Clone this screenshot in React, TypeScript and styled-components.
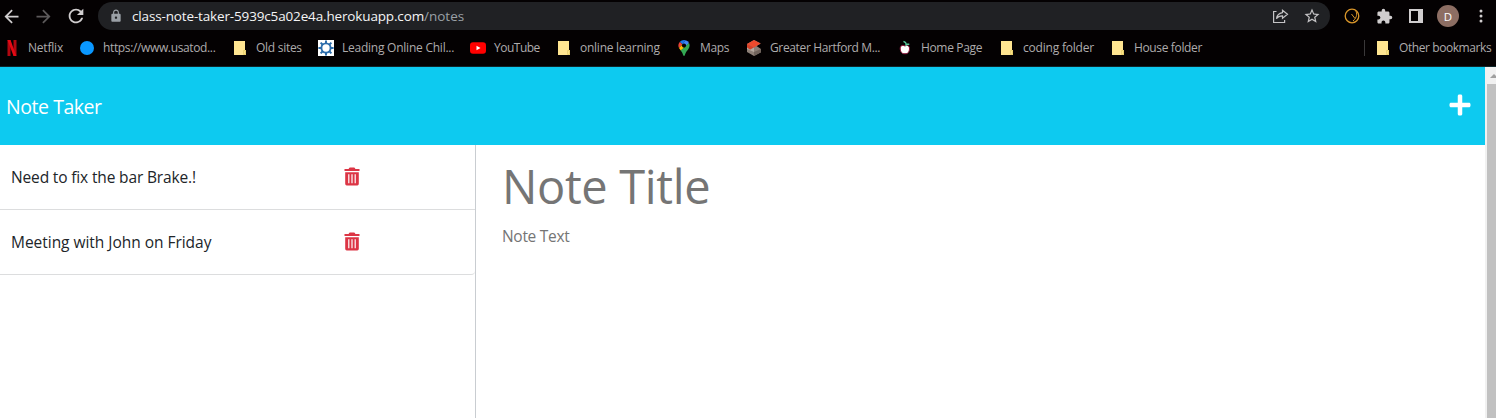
import React from "react";
import styled, { createGlobalStyle } from "styled-components";
import { FaPlus } from "react-icons/fa";
import { MdArrowBack, MdArrowForward, MdRefresh, MdLock, MdStarOutline, MdExtension } from "react-icons/md";

const Global = createGlobalStyle`
  * { box-sizing: border-box; }
  body { margin: 0; background: #fff; font-family: "Open Sans", "Noto Sans", sans-serif; overflow: hidden; }
`;

const Page = styled.div`
  display: flex;
  flex-direction: column;
  height: 418px;
  overflow: hidden;
`;

const Browser = styled.div`
  flex: none;
  height: 67px;
  background: #040102;
  border-bottom: 1px solid #10262b;
`;

const Toolbar = styled.div`
  display: flex;
  align-items: center;
  height: 32px;
  color: #d0cdce;
`;

const NavButtons = styled.div`
  display: flex;
  align-items: center;
  gap: 11px;
  width: 98px;
  padding-left: 1px;
  svg { display: block; }
`;

const Dim = styled.span`
  color: #5c595a;
`;

const AddressBar = styled.div`
  display: flex;
  align-items: center;
  width: 1232px;
  height: 28px;
  padding: 0 9px 0 11px;
  border-radius: 14px;
  background: #202124;
  color: #9aa0a6;
`;

const Spaced = styled.span<{ $ls?: number }>`
  letter-spacing: ${(p) => p.$ls ?? 0}px;
  white-space: nowrap;
`;

const Url = styled.div`
  flex: 1;
  margin-left: 9px;
  font-size: 13.5px;
  line-height: 18px;
  color: #9aa0a6;
`;

const Host = styled(Spaced)`
  color: #f4f4f5;
`;

const BarActions = styled.div`
  display: flex;
  align-items: center;
  gap: 14px;
  color: #c4c3c5;
`;

const Extensions = styled.div`
  display: flex;
  flex: 1;
  align-items: center;
  padding-left: 13px;
`;

const Slot = styled.div<{ $w: number }>`
  display: flex;
  align-items: center;
  width: ${(p) => p.$w}px;
`;

const Avatar = styled.div`
  display: grid;
  place-items: center;
  width: 22px;
  height: 22px;
  border-radius: 50%;
  background: #8d6e63;
  color: #fff;
  font-size: 11.5px;
`;

const Bookmarks = styled.div`
  display: flex;
  align-items: center;
  gap: 16px;
  height: 32px;
  padding-left: 4px;
`;

const Bookmark = styled.div`
  display: flex;
  align-items: center;
  gap: 8px;
  svg { flex: none; display: block; }
`;

const Label = styled.span<{ $w: number; $ls: number }>`
  width: ${(p) => p.$w}px;
  letter-spacing: ${(p) => p.$ls}px;
  font-size: 12px;
  line-height: 16px;
  color: #aeabac;
  white-space: nowrap;
`;

const OtherBookmarks = styled(Bookmark)`
  margin-left: auto;
  height: 16px;
  padding-left: 10px;
  border-left: 1px solid #3a3839;
  margin-right: 5px;
`;

const Viewport = styled.div`
  display: flex;
  flex: 1;
  min-height: 0;
`;

const Content = styled.div`
  display: flex;
  flex: 1;
  flex-direction: column;
`;

const Header = styled.header`
  display: flex;
  flex: none;
  align-items: center;
  justify-content: space-between;
  height: 78px;
  padding: 0 13px 0 6px;
  background: #0dcaf0;
  color: #fff;
  svg { margin-bottom: 2px; }
`;

const Brand = styled.div`
  font-size: 19.5px;
  line-height: 30px;
  padding-top: 1px;
`;

const Main = styled.main`
  display: flex;
  flex: 1;
  min-height: 0;
`;

const Sidebar = styled.aside`
  width: 476px;
  border-right: 1px solid #c9cdd1;
`;

const Note = styled.div<{ $last?: boolean }>`
  display: flex;
  align-items: center;
  height: 65px;
  padding-left: 11px;
  border-bottom: 1px solid #dcddde;
  border-bottom-right-radius: ${(p) => (p.$last ? 4 : 0)}px;
  color: #212529;
  font-size: 15.5px;
  svg { color: #dc3545; margin-bottom: 2px; }
`;

const NoteName = styled.div`
  width: 333px;
`;

const Editor = styled.section`
  flex: 1;
  padding: 11px 0 0 26px;
  color: #757575;
`;

const Title = styled.div`
  font-size: 47px;
  line-height: 60px;
`;

const Body = styled.div`
  margin-top: 8px;
  font-size: 15.5px;
  line-height: 24px;
`;

const Scrollbar = styled.div`
  display: flex;
  flex-direction: column;
  width: 11px;
  padding-left: 2px;
  background: #f1f1f1;
  overflow: hidden;
`;

const ScrollUp = styled.div`
  flex: none;
  height: 17px;
  padding: 7px 0 0 3px;
  svg { display: block; }
`;

const Thumb = styled.div`
  flex: 1;
  background: #c1c1c1;
`;

const Icon = ({ children }: { children: React.ReactNode }) => (
  <svg width="16" height="16" viewBox="0 0 16 16">{children}</svg>
);

const Folder = () => (
  <Icon>
    <path d="M2 1h11v9h1v5H2z" fill="#ffe591" />
    <path d="M11.7 14.5v-4h1.8v4z" fill="#ffe88f" stroke="#d9bd55" strokeWidth=".6" />
  </Icon>
);

const Netflix = () => (
  <Icon>
    <path d="M3.5 0h3v16l-3 .3zM9.500 0h3v16.300l-3-.3z" fill="#b20710" />
    <path d="M3.500 0h3l6 16.300-3-.3z" fill="#e50914" />
  </Icon>
);

const Dot = () => (
  <Icon><circle cx="8" cy="8" r="7" fill="#0a97ff" /></Icon>
);

const Gear = () => (
  <Icon>
    <rect width="16" height="16" fill="#fff" />
    <circle cx="8" cy="8" r="4.600" fill="none" stroke="#2b6cab" strokeWidth="1.900" />
    <g stroke="#2b6cab" strokeWidth="2">
      {[0, 45, 90, 135, 180, 225, 270, 315].map((a) => (
        <path key={a} d="M8 .4v2.600" transform={`rotate(${a} 8 8)`} />
      ))}
    </g>
  </Icon>
);

const YouTube = () => (
  <Icon>
    <rect x="0" y="2.300" width="16" height="11.400" rx="3" fill="#f00" />
    <path d="M6.500 5.700l4 2.300-4 2.300z" fill="#fff" />
  </Icon>
);

const Maps = () => (
  <Icon>
    <path d="M8 0a5.600 5.600 0 0 0-4.300 2L6.500 4.300 9.700.3A6 6 0 0 0 8 0z" fill="#1a73e8" />
    <path d="M3.700 2a5.600 5.600 0 0 0-.7 6l3.500-3.700z" fill="#ea4335" />
    <path d="M9.700.3a5.600 5.600 0 0 1 3.300 2.700L9.700 6.900 6.300 4.300z" fill="#4285f4" />
    <path d="M3 8l1.700 2.500L9.700 7 6.500 4.300z" fill="#fbbc04" />
    <path d="M13 3c1 2 .7 4-.6 6C11 11 9.500 12.500 8.800 15.300c-.2.900-1.300.9-1.600 0C6.700 13.500 6 12 4.700 10.500z" fill="#34a853" />
    <circle cx="8" cy="5.600" r="2.100" fill="#040102" />
  </Icon>
);

const Hexagon = () => (
  <Icon>
    <path d="M8 0l6.700 3.500L10.500 6 15 9v3.200L8 16l-7-4V4z" fill="#8d7f77" />
    <path d="M8 0l6.700 3.500L8 7.500 1 4z" fill="#ee4a2d" />
    <path d="M1 4l7 3.500-4 2.300L1 7.500z" fill="#d83f26" />
    <path d="M1 7.500l3 2.300L8 7.500V12l-7-3z" fill="#b5a89f" />
    <path d="M8 12l7-3v3.200L8 16z" fill="#6f625b" />
  </Icon>
);

const Apple = () => (
  <Icon>
    <path d="M8 6C5 4.500 3 6 3.200 9c.3 3 2 5.200 4.800 4.700 3 .5 4.300-2 4.500-4.700.2-3-2-4.500-4.500-3z" fill="#fff" stroke="#8a1238" strokeWidth="1" />
    <path d="M6.500 1.300l2.600 1.500M9 4.300h3.300M8.800 3l.4 3" fill="none" stroke="#56c79b" strokeWidth="1.400" />
  </Icon>
);

const Trash = () => (
  <svg width="16" height="19" viewBox="0 0 16 19" fill="currentColor">
    <path d="M5 1.200Q5.200.5 6 .5h4q.8 0 1 .7l.4.800h4.100v2H.5V2h4.100z" />
    <path fillRule="evenodd" d="M1.200 5.200h13.600v11.600q0 1.700-1.500 1.700H2.700q-1.500 0-1.500-1.700zM4.200 7.300v8.900h1.200V7.300zM7.400 7.300v8.900h1.200V7.300zM10.600 7.300v8.900h1.200V7.300z" />
  </svg>
);

const bookmarks: { icon: React.ReactNode; text: string; w: number; ls: number }[] = [
  { icon: <Netflix />, text: "Netflix", w: 35, ls: -0.2 },
  { icon: <Dot />, text: "https://www.usatod...", w: 113, ls: -0.36 },
  { icon: <Folder />, text: "Old sites", w: 46, ls: -0.28 },
  { icon: <Gear />, text: "Leading Online Chil...", w: 112, ls: -0.24 },
  { icon: <YouTube />, text: "YouTube", w: 46, ls: -0.5 },
  { icon: <Folder />, text: "online learning", w: 80, ls: -0.25 },
  { icon: <Maps />, text: "Maps", w: 30, ls: -0.35 },
  { icon: <Hexagon />, text: "Greater Hartford M...", w: 111, ls: -0.36 },
  { icon: <Apple />, text: "Home Page", w: 62, ls: -0.35 },
  { icon: <Folder />, text: "coding folder", w: 71, ls: -0.2 },
  { icon: <Folder />, text: "House folder", w: 70, ls: -0.36 },
];

export default function App() {
  return (
    <Page>
      <Global />
      <Browser>
        <Toolbar>
          <NavButtons>
            <MdArrowBack size={21} />
            <Dim><MdArrowForward size={21} /></Dim>
            <MdRefresh size={22} />
          </NavButtons>
          <AddressBar>
            <MdLock size={14} />
            <Url><Host $ls={-0.15}>class-note-taker-5939c5a02e4a.herokuapp.com</Host><Spaced $ls={0}>/notes</Spaced></Url>
            <BarActions>
              <svg width="17" height="16" viewBox="0 0 17 16" fill="none" stroke="currentColor" strokeWidth="1.200">
                <path d="M4.500 3.500H1.600v11h11V12" />
                <path d="M10.500 2.200l5 4-5 4V7.800c-2.600 0-4.700.8-6 3 .4-3.600 2.700-5.700 6-6.200z" />
              </svg>
              <MdStarOutline size={18} />
            </BarActions>
          </AddressBar>
          <Extensions>
            <Slot $w={33}>
              <svg width="18" height="18" viewBox="0 0 18 18" fill="none" stroke="#d9962a" strokeWidth="1.300">
                <circle cx="9" cy="9" r="6.800" />
                <path d="M8.500 7l3.500 4.500M12.500 3.500c2 3 1.500 7-2.500 10.500" strokeWidth="1" />
              </svg>
            </Slot>
            <Slot $w={33}><MdExtension size={17} /></Slot>
            <Slot $w={28}>
              <svg width="14" height="14" viewBox="0 0 14 14"><path fillRule="evenodd" d="M0 0h14v14H0zM2 2v10h7V2z" fill="currentColor" /></svg>
            </Slot>
            <Slot $w={42}><Avatar>D</Avatar></Slot>
            <svg width="4" height="14" viewBox="0 0 4 14" fill="currentColor"><circle cx="2" cy="2" r="1.500" /><circle cx="2" cy="7" r="1.500" /><circle cx="2" cy="12" r="1.500" /></svg>
          </Extensions>
        </Toolbar>
        <Bookmarks>
          {bookmarks.map((b) => (
            <Bookmark key={b.text}>{b.icon}<Label $w={b.w} $ls={b.ls}>{b.text}</Label></Bookmark>
          ))}
          <OtherBookmarks><Folder /><Label $w={92} $ls={-0.42}>Other bookmarks</Label></OtherBookmarks>
        </Bookmarks>
      </Browser>
      <Viewport>
        <Content>
          <Header>
            <Brand><Spaced $ls={-0.45}>Note Taker</Spaced></Brand>
            <FaPlus size={24} />
          </Header>
          <Main>
            <Sidebar>
              <Note><NoteName><Spaced $ls={-0.15}>Need to fix the bar Brake.!</Spaced></NoteName><Trash /></Note>
              <Note $last><NoteName><Spaced $ls={-0.03}>Meeting with John on Friday</Spaced></NoteName><Trash /></Note>
            </Sidebar>
            <Editor>
              <Title><Spaced $ls={-0.35}>Note Title</Spaced></Title>
              <Body><Spaced $ls={-0.3}>Note Text</Spaced></Body>
            </Editor>
          </Main>
        </Content>
        <Scrollbar>
          <ScrollUp><svg width="8" height="4" viewBox="0 0 8 4"><path d="M0 4l4-4 4 4z" fill="#a0a0a0" /></svg></ScrollUp>
          <Thumb />
        </Scrollbar>
      </Viewport>
    </Page>
  );
}
